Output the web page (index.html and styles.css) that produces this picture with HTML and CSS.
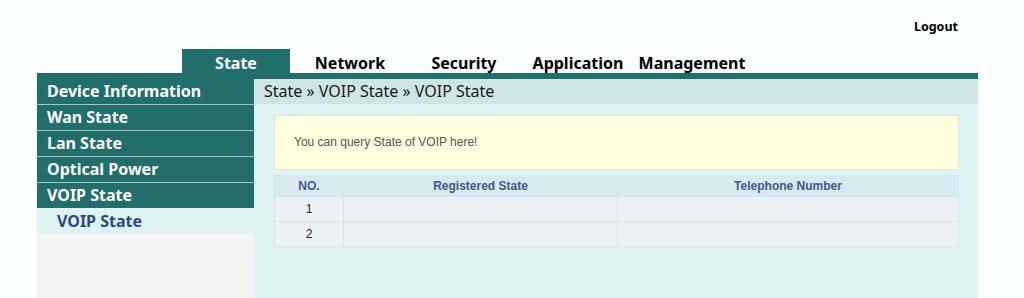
FILE: index.html
```html
<!DOCTYPE html>
<html lang="en">
<head>
    <meta charset="UTF-8">
    <title>VOIP State</title>
    <link rel="stylesheet" href="styles.css">
</head>
<body>
    <div class="page">
        <div class="topbar">
            <a class="logout" href="#">Logout</a>
        </div>

        <div class="mainnav">
            <div class="nav-item active">State</div>
            <div class="nav-item">Network</div>
            <div class="nav-item">Security</div>
            <div class="nav-item">Application</div>
            <div class="nav-item">Management</div>
        </div>
        <div class="navbar-line"></div>

        <div class="layout">
            <div class="sidebar">
                <div class="side-item">Device Information</div>
                <div class="side-item">Wan State</div>
                <div class="side-item">Lan State</div>
                <div class="side-item">Optical Power</div>
                <div class="side-item last">VOIP State</div>
                <div class="side-sub">VOIP State</div>
                <div class="side-fill"></div>
            </div>

            <div class="content">
                <div class="breadcrumb">State &raquo; VOIP State &raquo; VOIP State</div>
                <div class="content-body">
                    <div class="notice">You can query State of VOIP here!</div>
                    <table class="data-table">
                        <tr>
                            <th class="col-no">NO.</th>
                            <th class="col-reg">Registered State</th>
                            <th>Telephone Number</th>
                        </tr>
                        <tr>
                            <td>1</td>
                            <td></td>
                            <td></td>
                        </tr>
                        <tr>
                            <td>2</td>
                            <td></td>
                            <td></td>
                        </tr>
                    </table>
                </div>
            </div>
        </div>
    </div>
</body>
</html>
```

FILE: styles.css
```css
html, body {
    margin: 0;
    padding: 0;
    height: 100%;
}
body {
    background-color: #fbfefe;
    font-family: "Noto Sans", "Open Sans", sans-serif;
    color: #000;
}
.page {
    width: 941px;
    margin-left: 37px;
    height: 100%;
    display: flex;
    flex-direction: column;
}
.topbar {
    height: 49px;
    display: flex;
    justify-content: flex-end;
    align-items: flex-start;
    padding-right: 20px;
}
.logout {
    margin-top: 18px;
    font-size: 12.5px;
    font-weight: bold;
    color: #000;
    text-decoration: none;
}
.mainnav {
    display: flex;
    height: 24px;
    padding-left: 142px;
}
.nav-item {
    width: 108px;
    margin: 0 3px;
    text-align: center;
    font-size: 16px;
    font-weight: bold;
    line-height: 28px;
    color: #000;
}
.nav-item.active {
    background-color: #216e6b;
    color: #fff;
}
.navbar-line {
    height: 6px;
    background-color: #216e6b;
}
.layout {
    flex: 1;
    display: flex;
}
.sidebar {
    width: 217px;
    display: flex;
    flex-direction: column;
}
.side-item {
    height: 25px;
    line-height: 25px;
    padding-left: 10px;
    background-color: #216e6b;
    border-bottom: 1px solid #a3c4c2;
    color: #fff;
    font-size: 16px;
    font-weight: bold;
}
.side-item.last {
    border-bottom: none;
}
.side-sub {
    height: 26px;
    line-height: 26px;
    padding-left: 20px;
    background-color: #e0f3f3;
    color: #2b4a80;
    font-size: 16px;
    font-weight: bold;
}
.side-fill {
    flex: 1;
    background-color: #f4f4f4;
}
.content {
    flex: 1;
    display: flex;
    flex-direction: column;
    background-color: #e0f3f3;
}
.breadcrumb {
    height: 25px;
    line-height: 25px;
    padding-left: 10px;
    background-color: #cfe5e5;
    font-size: 16px;
    color: #1a1a1a;
}
.content-body {
    padding: 11px 19px 0 20px;
}
.notice {
    height: 53px;
    line-height: 53px;
    padding-left: 19px;
    background-color: #ffffde;
    border: 1px solid #d6e6dd;
    font-family: "Liberation Sans", Arial, sans-serif;
    font-size: 12px;
    color: #555;
}
.data-table {
    width: 100%;
    margin-top: 5px;
    border-collapse: collapse;
    font-family: "Liberation Sans", Arial, sans-serif;
    font-size: 12px;
}
.data-table th,
.data-table td {
    border: 1px solid #d3e7e7;
    text-align: center;
    padding: 0;
}
.data-table th {
    height: 20px;
    background-color: #d8e9f0;
    color: #3d5b8b;
    font-weight: bold;
}
.data-table td {
    height: 24px;
    background-color: #edf0f4;
    color: #222;
}
.col-no {
    width: 68px;
}
.col-reg {
    width: 273px;
}
```
